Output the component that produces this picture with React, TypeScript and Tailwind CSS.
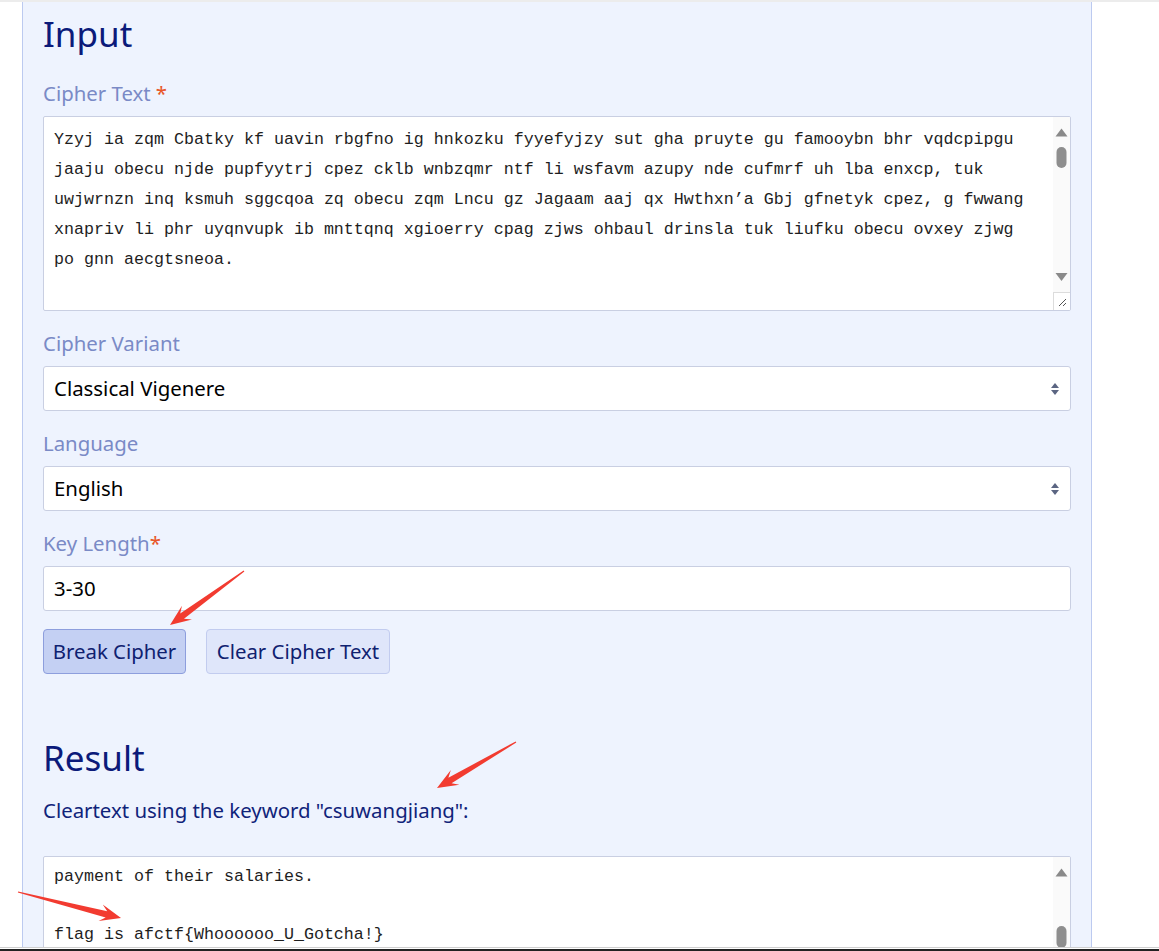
import React from 'react'

const cipherLines = [
  'Yzyj ia zqm Cbatky kf uavin rbgfno ig hnkozku fyyefyjzy sut gha pruyte gu famooybn bhr vqdcpipgu',
  'jaaju obecu njde pupfyytrj cpez cklb wnbzqmr ntf li wsfavm azupy nde cufmrf uh lba enxcp, tuk',
  'uwjwrnzn inq ksmuh sggcqoa zq obecu zqm Lncu gz Jagaam aaj qx Hwthxn\u2019a Gbj gfnetyk cpez, g fwwang',
  'xnapriv li phr uyqnvupk ib mnttqnq xgioerry cpag zjws ohbaul drinsla tuk liufku obecu ovxey zjwg',
  'po gnn aecgtsneoa.',
]

const resultLines = ['payment of their salaries.', '', 'flag is afctf{Whoooooo_U_Gotcha!}']

function Arrow({ tail, tip }: { tail: [number, number]; tip: [number, number] }) {
  const dx = tip[0] - tail[0]
  const dy = tip[1] - tail[1]
  const len = Math.hypot(dx, dy)
  const d = [dx / len, dy / len]
  const n = [-d[1], d[0]]
  const at = (base: number[], back: number, side: number) =>
    `${base[0] - d[0] * back + n[0] * side},${base[1] - d[1] * back + n[1] * side}`
  const pts = [
    at(tail, 0, 0.6),
    at(tip, 15, 3.2),
    at(tip, 21, 8.5),
    at(tip, 0, 0),
    at(tip, 21, -8.5),
    at(tip, 15, -3.2),
    at(tail, 0, -0.6),
  ].join(' ')
  return <polygon points={pts} fill="#f23b30" />
}

function SelectArrows() {
  return (
    <svg width="10" height="14" viewBox="0 0 10 14" className="shrink-0">
      <polygon points="1,6 9,6 5,1" fill="#5b6582" />
      <polygon points="1,8 9,8 5,13" fill="#5b6582" />
    </svg>
  )
}

function Label({ text, star, gap = true }: { text: string; star?: boolean; gap?: boolean }) {
  return (
    <div className="h-[28px] leading-[28px] text-[20.4px] text-[#7a8ac6] mb-[9px]">
      {text}
      {star && <span className={`text-[#e8572b] ${gap ? 'ml-[5px]' : ''}`}>*</span>}
    </div>
  )
}

function SelectBox({ value }: { value: string }) {
  return (
    <div className="h-[45px] bg-white border border-[#c9cfe2] rounded-[3px] flex items-center justify-between pl-[10px] pr-[10px] text-[20.4px] text-black">
      <span>{value}</span>
      <SelectArrows />
    </div>
  )
}

const mono = { fontFamily: '"Liberation Mono", "Courier New", monospace' }

export default function App() {
  return (
    <div
      className="relative w-full h-[951px] bg-white overflow-hidden flex flex-col"
      style={{ fontFamily: '"Noto Sans", "Open Sans", sans-serif' }}
    >
      <div className="h-[2px] bg-[#ececec] shrink-0" />
      <div className="flex-1 overflow-hidden">
        <div className="ml-[22px] w-[1070px] h-full border-x border-[#bccaf0] bg-[#eef3fe] px-[20px] pt-[10px]">
          {/* Input */}
          <h1 className="h-[44px] leading-[44px] text-[35px] text-[#0b1a7a] mb-[23px]">Input</h1>

          <Label text="Cipher Text" star />
          <div className="h-[195px] bg-white border border-[#c9cfe2] rounded-[2px] flex overflow-hidden">
            <div className="flex-1 pl-[10px] pt-[8px] text-[16.67px] leading-[30px] text-[#1e1e1e] whitespace-pre" style={mono}>
              {cipherLines.map((l, i) => (
                <div key={i}>{l}</div>
              ))}
            </div>
            <div className="w-[17px] shrink-0 flex flex-col bg-[#fafafa]">
              <svg width="17" height="175" viewBox="0 0 17 175" className="shrink-0">
                <polygon points="2.5,19.5 14.5,19.5 8.5,11.5" fill="#8a8a8a" />
                <rect x="3.5" y="30" width="10" height="21" rx="5" fill="#8e8e8e" />
                <polygon points="2.5,156 14.5,156 8.5,164" fill="#8a8a8a" />
              </svg>
              <div className="flex-1 bg-white border-t border-l border-[#dcdcdc] flex items-center justify-center">
                <svg width="10" height="10" viewBox="0 0 10 10">
                  <line x1="2" y1="9" x2="9" y2="2" stroke="#555" strokeWidth="1" />
                  <line x1="6" y1="9" x2="9" y2="6" stroke="#555" strokeWidth="1" />
                </svg>
              </div>
            </div>
          </div>

          <div className="mt-[18px]">
            <Label text="Cipher Variant" />
            <SelectBox value="Classical Vigenere" />
          </div>
          <div className="mt-[18px]">
            <Label text="Language" />
            <SelectBox value="English" />
          </div>
          <div className="mt-[18px]">
            <Label text="Key Length" star gap={false} />
            <div className="h-[45px] bg-white border border-[#c9cfe2] rounded-[3px] flex items-center pl-[10px] text-[20.4px] text-black">
              3-30
            </div>
          </div>

          <div className="mt-[18px] flex gap-[20px]">
            <button className="h-[45px] w-[143px] bg-[#c4d0f3] border border-[#8d9edd] rounded-[4px] text-[20.4px] text-[#0f2170]">
              Break Cipher
            </button>
            <button className="h-[45px] w-[184px] bg-[#dfe6fa] border border-[#c2ccef] rounded-[4px] text-[20.4px] text-[#0f2170]">
              Clear Cipher Text
            </button>
          </div>

          {/* Result */}
          <h1 className="mt-[62px] h-[44px] leading-[44px] text-[35px] text-[#0b1a7a]">Result</h1>
          <p className="mt-[16px] h-[28px] leading-[28px] text-[20.4px] text-[#10237a]">
            Cleartext using the keyword "csuwangjiang":
          </p>
          <div className="mt-[32px] h-[195px] bg-white border border-[#c9cfe2] rounded-[2px] flex overflow-hidden">
            <div className="flex-1 pl-[10px] pt-[5px] text-[16.67px] leading-[29px] text-[#1e1e1e] whitespace-pre" style={mono}>
              {resultLines.map((l, i) => (
                <div key={i} className="h-[29px]">{l}</div>
              ))}
            </div>
            <div className="w-[17px] shrink-0 bg-[#fafafa]">
              <svg width="17" height="120" viewBox="0 0 17 120">
                <polygon points="2.5,19.5 14.5,19.5 8.5,11.5" fill="#8a8a8a" />
                <rect x="3.5" y="69" width="10" height="22" rx="5" fill="#8e8e8e" />
              </svg>
            </div>
          </div>
        </div>
      </div>
      <div className="h-px bg-[#cfcfcf] shrink-0" />
      <div className="h-px bg-white shrink-0" />
      <div className="h-[2px] bg-[#222] shrink-0" />

      {/* annotation arrows */}
      <svg className="absolute inset-0 pointer-events-none" width="1159" height="951">
        <Arrow tail={[244, 571]} tip={[170, 625]} />
        <Arrow tail={[516, 742]} tip={[437, 788]} />
        <Arrow tail={[18, 892]} tip={[121, 918]} />
      </svg>
    </div>
  )
}
